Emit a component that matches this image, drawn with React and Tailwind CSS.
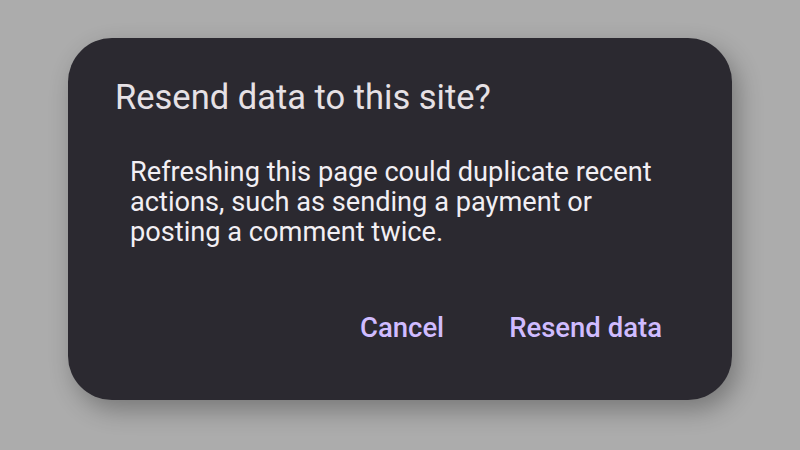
export default function App() {
  return (
    <div className="w-[800px] h-[450px] bg-[#acacac] flex items-start justify-center pt-[38px]" style={{ fontFamily: 'Roboto, "Noto Sans", sans-serif' }}>
      <div className="w-[664px] h-[362px] rounded-[44px] bg-[#2b2930] shadow-[6px_10px_24px_rgba(0,0,0,0.3)] flex flex-col pl-[47px] pr-[70px]">
        <h2 className="mt-[37px] text-[34.5px] leading-[44px] text-[#e6e1e5]">Resend data to this site?</h2>
        <p className="mt-[38px] ml-[15px] text-[27.2px] leading-[30px] text-[#f2eff4]">
          Refreshing this page could duplicate recent actions, such as sending a payment or posting a comment twice.
        </p>
        <div className="mt-auto mb-[56px] flex justify-end gap-[65px] text-[27.5px] leading-[32px] font-medium text-[#d0bcff]">
          <button>Cancel</button>
          <button>Resend data</button>
        </div>
      </div>
    </div>
  )
}
